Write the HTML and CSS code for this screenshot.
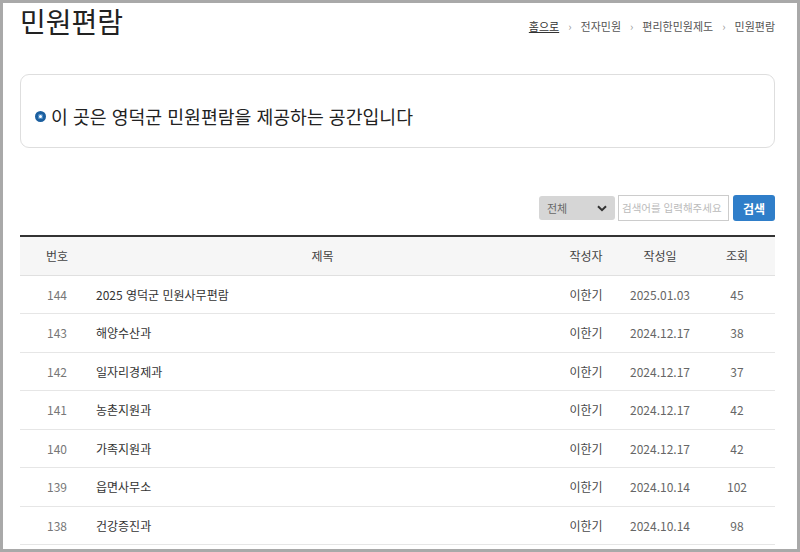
FILE: index.html
```html
<!DOCTYPE html>
<html lang="ko">
<head>
<meta charset="utf-8">
<title>민원편람</title>
<link rel="stylesheet" href="styles.css">
</head>
<body>
<div class="frame">
  <header class="page-head">
    <h1 class="title">민원편람</h1>
    <nav class="crumbs">
      <a class="home" href="#">홈으로</a><span class="sep">›</span><span>전자민원</span><span class="sep">›</span><span>편리한민원제도</span><span class="sep">›</span><span>민원편람</span>
    </nav>
  </header>

  <div class="intro">
    <span class="dot"></span><p>이 곳은 영덕군 민원편람을 제공하는 공간입니다</p>
  </div>

  <form class="search">
    <div class="select"><span>전체</span>
      <svg width="10" height="7" viewBox="0 0 10 7"><path d="M1 1.2 L5 5.2 L9 1.2" fill="none" stroke="#333" stroke-width="2"/></svg>
    </div>
    <div class="input">검색어를 입력해주세요</div>
    <button type="button" class="btn">검색</button>
  </form>

  <div class="board">
    <div class="row head">
      <div>번호</div><div>제목</div><div>작성자</div><div>작성일</div><div>조회</div>
    </div>
    <div class="row"><div class="num">144</div><div class="subj">2025 영덕군 민원사무편람</div><div class="auth">이한기</div><div class="date">2025.01.03</div><div class="hit">45</div></div>
    <div class="row"><div class="num">143</div><div class="subj">해양수산과</div><div class="auth">이한기</div><div class="date">2024.12.17</div><div class="hit">38</div></div>
    <div class="row"><div class="num">142</div><div class="subj">일자리경제과</div><div class="auth">이한기</div><div class="date">2024.12.17</div><div class="hit">37</div></div>
    <div class="row"><div class="num">141</div><div class="subj">농촌지원과</div><div class="auth">이한기</div><div class="date">2024.12.17</div><div class="hit">42</div></div>
    <div class="row"><div class="num">140</div><div class="subj">가족지원과</div><div class="auth">이한기</div><div class="date">2024.12.17</div><div class="hit">42</div></div>
    <div class="row"><div class="num">139</div><div class="subj">읍면사무소</div><div class="auth">이한기</div><div class="date">2024.10.14</div><div class="hit">102</div></div>
    <div class="row"><div class="num">138</div><div class="subj">건강증진과</div><div class="auth">이한기</div><div class="date">2024.10.14</div><div class="hit">98</div></div>
  </div>
</div>
</body>
</html>
```

FILE: styles.css
```css
html, body {
  margin: 0;
  padding: 0;
  background: #fff;
}
body {
  font-family: "Noto Sans CJK KR", "Noto Sans", sans-serif;
  color: #333;
}
.frame {
  box-sizing: border-box;
  width: 800px;
  height: 552px;
  overflow: hidden;
  border: 3px solid #a9a9a9;
  padding: 0 22px 0 17px;
}
.page-head {
  display: flex;
  justify-content: space-between;
  align-items: flex-start;
  height: 36px;
}
.title {
  margin: 0;
  font-size: 28px;
  line-height: 36px;
  font-weight: 400;
  color: #222;
}
.crumbs {
  padding-top: 14px;
  font-size: 11px;
  line-height: 18px;
  color: #555;
}
.crumbs .home {
  color: #333;
  text-decoration: underline;
}
.crumbs .sep {
  margin: 0 9px;
  color: #999;
}
.intro {
  margin-top: 35px;
  box-sizing: border-box;
  height: 74px;
  border: 1px solid #dedede;
  border-radius: 9px;
  padding: 29px 14px 0;
  display: flex;
  align-items: flex-start;
}
.intro p {
  margin: 0;
  font-size: 18.3px;
  line-height: 24px;
  color: #222;
}
.dot {
  box-sizing: border-box;
  width: 11px;
  height: 11px;
  margin: 7px 5px 0 0;
  border-radius: 50%;
  border: 3px solid #1c5f9f;
  background: #fff;
  box-shadow: 0 0 0 1px #3a84c8 inset;
}
.search {
  margin: 47px 0 0;
  display: flex;
  justify-content: flex-end;
  gap: 3px;
  height: 26px;
}
.select {
  box-sizing: border-box;
  width: 76px;
  height: 24px;
  margin-top: 1px;
  background: #d6d6d6;
  border-radius: 3px;
  display: flex;
  align-items: center;
  justify-content: space-between;
  padding: 0 8px 0 8px;
  font-size: 11px;
  color: #666;
}
.input {
  box-sizing: border-box;
  width: 111px;
  height: 26px;
  border: 1px solid #ccc;
  padding: 0 3px;
  font-size: 10.5px;
  line-height: 24px;
  color: #bbb;
  white-space: nowrap;
  overflow: hidden;
}
.btn {
  box-sizing: border-box;
  width: 42px;
  height: 26px;
  margin-left: 1px;
  border: 0;
  border-radius: 3px;
  background: #2f7ec9;
  color: #fff;
  font-family: inherit;
  font-size: 12px;
  font-weight: 700;
  padding: 0;
}
.board {
  margin-top: 14px;
  border-top: 2px solid #333;
}
.row {
  box-sizing: border-box;
  display: grid;
  grid-template-columns: 74px 1fr 70px 78px 76px;
  height: 38.5px;
  align-items: center;
  border-bottom: 1px solid #e6e6e6;
  font-size: 12px;
  text-align: center;
  color: #555;
}
.row.head {
  background: #f6f6f6;
  border-bottom-color: #e0e0e0;
  color: #444;
}
.row .num { color: #777; }
.row .subj {
  text-align: left;
  padding-left: 2px;
  color: #333;
}
.row .auth { color: #4a4a4a; }
.row .date { color: #666; }
.row .hit { color: #666; }
```
